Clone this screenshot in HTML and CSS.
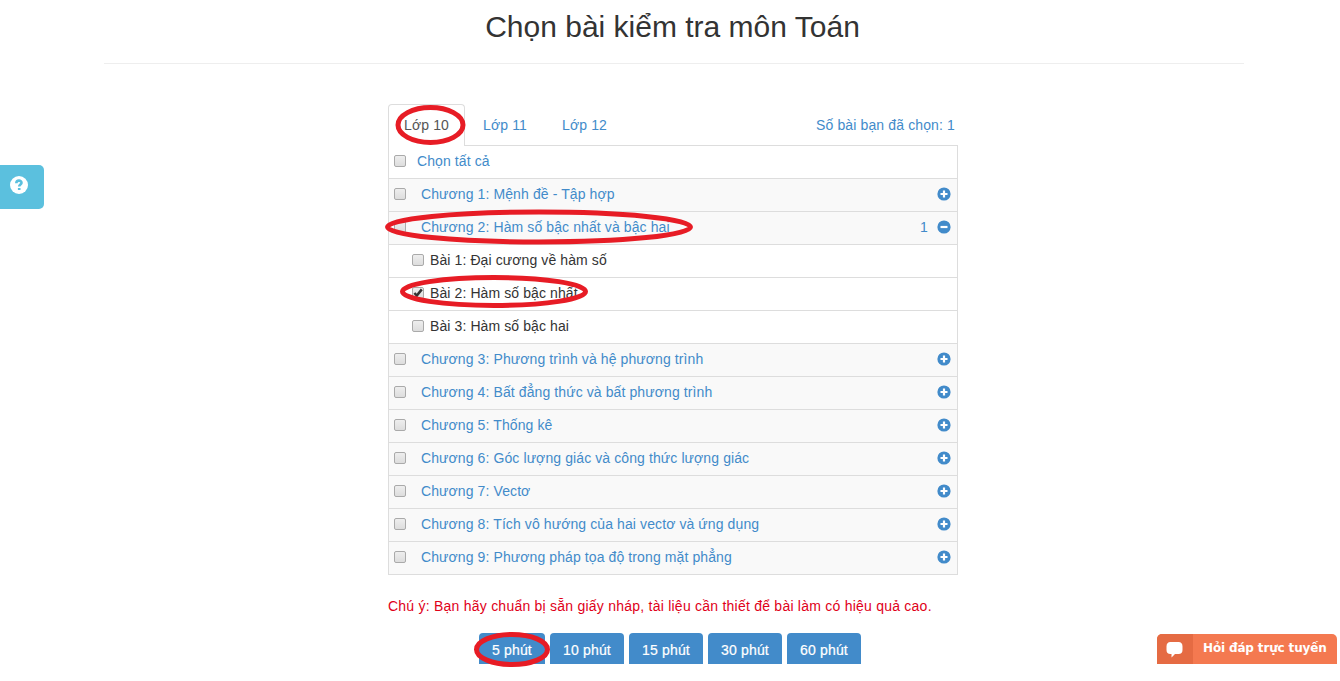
FILE: index.html
```html
<!DOCTYPE html>
<html lang="vi">
<head>
<meta charset="utf-8">
<title>Chọn bài kiểm tra môn Toán</title>
<link rel="stylesheet" href="styles.css">
</head>
<body>
<svg class="defs" width="0" height="0">
  <symbol id="plus" viewBox="0 0 14 14"><circle cx="7" cy="7" r="6.6" fill="#428bca"/><path d="M7 3.5v7M3.5 7h7" stroke="#fff" stroke-width="2.2"/></symbol>
  <symbol id="minus" viewBox="0 0 14 14"><circle cx="7" cy="7" r="6.6" fill="#428bca"/><path d="M3.5 7h7" stroke="#fff" stroke-width="2.2"/></symbol>
</svg>
<div class="page">
  <header class="page-header"><h1 class="title">Chọn bài kiểm tra môn Toán</h1></header>
  <main class="panel">
    <nav class="tabs">
      <a class="tab active">Lớp 10</a>
      <a class="tab">Lớp 11</a>
      <a class="tab">Lớp 12</a>
      <span class="count">Số bài bạn đã chọn: 1</span>
    </nav>
    <div class="list">
      <div class="row all"><span class="box"></span><span class="name">Chọn tất cả</span></div>
      <div class="row chapter"><span class="box"></span><span class="name">Chương 1: Mệnh đề - Tập hợp</span><svg class="toggle"><use href="#plus"/></svg></div>
      <div class="row chapter"><span class="box"></span><span class="name">Chương 2: Hàm số bậc nhất và bậc hai</span><span class="picked">1</span><svg class="toggle"><use href="#minus"/></svg></div>
      <div class="row lesson"><span class="box"></span><span class="name">Bài 1: Đại cương về hàm số</span></div>
      <div class="row lesson"><span class="box"><svg class="check" viewBox="0 0 12 12"><path d="M2.4 6l2.400 2.500L9.800 2.400" fill="none" stroke="#333" stroke-width="2.5"/></svg></span><span class="name">Bài 2: Hàm số bậc nhất</span></div>
      <div class="row lesson"><span class="box"></span><span class="name">Bài 3: Hàm số bậc hai</span></div>
      <div class="row chapter"><span class="box"></span><span class="name">Chương 3: Phương trình và hệ phương trình</span><svg class="toggle"><use href="#plus"/></svg></div>
      <div class="row chapter"><span class="box"></span><span class="name">Chương 4: Bất đẳng thức và bất phương trình</span><svg class="toggle"><use href="#plus"/></svg></div>
      <div class="row chapter"><span class="box"></span><span class="name">Chương 5: Thống kê</span><svg class="toggle"><use href="#plus"/></svg></div>
      <div class="row chapter"><span class="box"></span><span class="name">Chương 6: Góc lượng giác và công thức lượng giác</span><svg class="toggle"><use href="#plus"/></svg></div>
      <div class="row chapter"><span class="box"></span><span class="name">Chương 7: Vectơ</span><svg class="toggle"><use href="#plus"/></svg></div>
      <div class="row chapter"><span class="box"></span><span class="name">Chương 8: Tích vô hướng của hai vectơ và ứng dụng</span><svg class="toggle"><use href="#plus"/></svg></div>
      <div class="row chapter"><span class="box"></span><span class="name">Chương 9: Phương pháp tọa độ trong mặt phẳng</span><svg class="toggle"><use href="#plus"/></svg></div>
    </div>
    <p class="note">Chú ý: Bạn hãy chuẩn bị sẵn giấy nháp, tài liệu cần thiết để bài làm có hiệu quả cao.</p>
    <div class="times">
      <a class="btn short">5 phút</a><a class="btn">10 phút</a><a class="btn">15 phút</a><a class="btn">30 phút</a><a class="btn">60 phút</a>
    </div>
  </main>
</div>
<a class="help"><svg width="18" height="18" viewBox="0 0 18 18"><circle cx="9" cy="9" r="9" fill="#fff"/><path d="M6.3 7.2C6.4 3.700 11.700 3.900 11.500 6.900C11.400 8.600 9.200 8.500 9.200 10.600M9.200 11.900v2.200" fill="none" stroke="#5bc0de" stroke-width="2.600"/></svg></a>
<div class="chat">
  <span class="chat-icon"><svg width="17" height="16" viewBox="0 0 17 16"><path d="M4.500 0h8Q16.500 0 16.500 4.500v3.500Q16.500 12 12.500 12H9L5.500 15.500V12H4.500Q.5 12 .5 8V4.500Q.5 0 4.500 0z" fill="#fff"/></svg></span>
  <span class="chat-label">Hỏi đáp trực tuyến</span>
</div>
<svg class="marks" width="1340" height="681" viewBox="0 0 1340 681">
  <ellipse cx="430.500" cy="125" rx="32.500" ry="17.500"/>
  <ellipse cx="539" cy="227" rx="151.500" ry="15"/>
  <ellipse cx="494" cy="291.500" rx="91.500" ry="14"/>
  <ellipse cx="512" cy="649.500" rx="35.500" ry="15"/>
</svg>
</body>
</html>
```
FILE: styles.css
```css
* { box-sizing: border-box; }
body {
  margin: 0;
  height: 681px;
  overflow: hidden;
  background: #fff;
  color: #333;
  font: 14px/20px "Liberation Sans", Arial, sans-serif;
}
.defs { position: absolute; }
.page { width: 1140px; margin-left: 104px; }
.page-header { height: 64px; padding-top: 9px; border-bottom: 1px solid #eee; text-align: center; }
.title { margin: 0; font-size: 30px; line-height: 36px; font-weight: 400; padding-right: 3px; }
.panel { width: 570px; margin: 40px 0 0 284px; }
.tabs { display: flex; height: 42px; border-bottom: 1px solid #ddd; color: #428bca; letter-spacing: .13px; }
.tab { width: 77px; height: 42px; margin-right: 2px; padding: 11px 0 0 16px; white-space: nowrap; }
.tab.active { color: #555; background: #fff; border: 1px solid #ddd; border-bottom: 0; border-radius: 4px 4px 0 0; padding: 10px 0 0 15px; }
.count { margin-left: auto; padding: 11px 3px 0 0; }
.list { border: 1px solid #ddd; border-top: 0; }
.row { display: flex; align-items: center; height: 33px; padding: 0 6px 2px 5px; border-bottom: 1px solid #ddd; letter-spacing: .1px; }
.row:last-child { border-bottom: 0; height: 32px; }
.chapter { background: #f9f9f9; }
.all, .chapter { color: #428bca; }
.lesson { padding-left: 23px; }
.box { width: 12px; height: 12px; border: 1px solid #aaa; border-radius: 2px; background: linear-gradient(#eee, #ddd); }
.name { white-space: nowrap; margin-left: 15px; }
.all .name { margin-left: 11px; }
.lesson .name { margin-left: 6px; }
.check { display: block; width: 12px; height: 12px; margin: -1px; }
.toggle { width: 14px; height: 14px; margin-left: auto; }
.picked { margin-left: auto; margin-right: 9px; }
.picked + .toggle { margin-left: 0; }
.note { margin: 21px 0 0; color: #e00019; white-space: nowrap; letter-spacing: .235px; }
.times { display: flex; gap: 5px; width: 382px; height: 31px; margin: 17px 0 0 91px; overflow: hidden; }
.btn { width: 74px; height: 36px; border-radius: 4px; background: #428bca; color: #fff; text-align: center; line-height: 34px; letter-spacing: .15px; -webkit-text-stroke: .2px #fff; }
.btn.short { width: 66px; }
.help { position: absolute; left: 0; top: 165px; width: 44px; height: 44px; padding: 11px 0 0 10px; background: #5bc0de; border-radius: 0 5px 5px 0; }
.chat { position: absolute; left: 1157px; top: 634px; display: flex; width: 180px; height: 30px; overflow: hidden; border-radius: 5px 5px 0 0; background: #f47950; color: #fff; font: bold 12px/29px "DejaVu Sans", sans-serif; }
.chat-icon { width: 36px; padding: 8px 0 0 9px; background: #e56b43; line-height: 0; }
.chat-label { padding-left: 10px; white-space: nowrap; letter-spacing: -.15px; }
.marks { position: absolute; left: 0; top: 0; fill: none; stroke: #e71c25; stroke-width: 5; }
```
